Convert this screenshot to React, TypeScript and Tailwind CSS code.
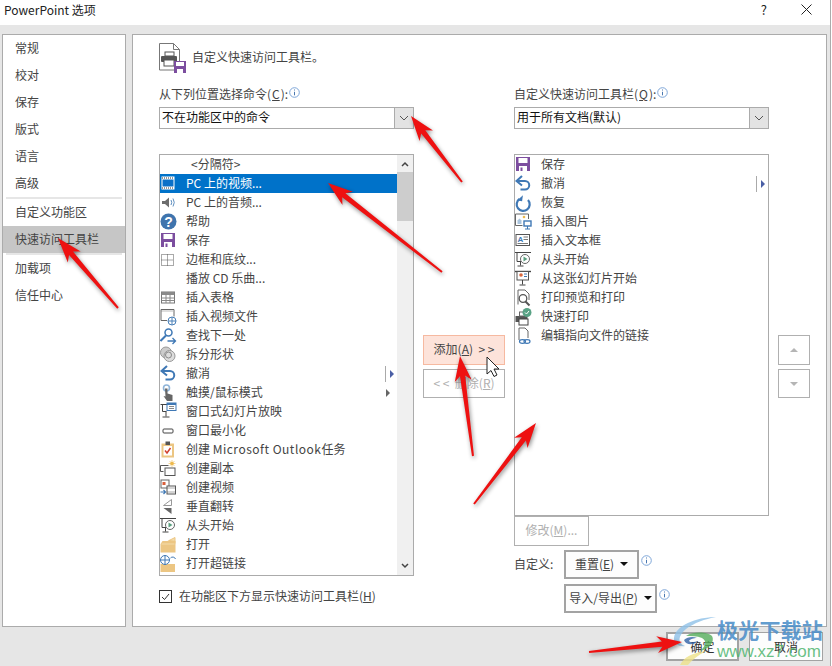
import React from 'react';

const FONT = "font-['Noto_Sans_CJK_SC','Noto_Sans',sans-serif]";

/* small command icons, all drawn on an 18x18 box */
function CmdIcon({ name }: { name: string }) {
  const g = '#6d6d6d';
  const blue = '#3f78b5';
  const tan = '#ecc683';
  let body: React.ReactNode = null;
  switch (name) {
    case 'film':
      body = (
        <>
          <rect x="1.500" y="1.500" width="13" height="13" fill="#fff" />
          <rect x="2.500" y="4.500" width="11" height="7" fill="#0a70c8" />
          <path d="M2 3h12M2 13h12" stroke="#333" strokeDasharray="1 1" />
        </>
      );
      break;
    case 'speaker':
      body = (
        <>
          <path d="M2 7h3l4-3.500v10L5 10H2z" fill={g} />
          <path d="M11 6q1.500 2.500 0 5M13 4.500q2.500 4 0 8" stroke="#5f8fc0" fill="none" />
        </>
      );
      break;
    case 'help':
      body = (
        <>
          <circle cx="8.500" cy="8.500" r="8" fill="#3f74ad" />
          <text x="8.500" y="13.500" textAnchor="middle" fontSize="14" fontWeight="700" fill="#fff" fontFamily="Liberation Sans">?</text>
        </>
      );
      break;
    case 'save':
      body = (
        <>
          <rect x="1" y="1" width="14" height="14" fill="#7c4e9f" />
          <rect x="3.500" y="2" width="9" height="5" fill="#fff" />
          <rect x="4" y="10" width="8" height="5" fill="#fff" />
          <rect x="5.500" y="11.500" width="2" height="3.500" fill="#7c4e9f" />
        </>
      );
      break;
    case 'border':
      body = <path d="M1.500 3.500h12v11h-12zM7.500 3.500v11M1.500 9h12" fill="none" stroke="#555" strokeDasharray="1 1" />;
      break;
    case 'table':
      body = (
        <>
          <rect x="1.500" y="3" width="13" height="11" fill="#fff" stroke="#777" />
          <rect x="1.500" y="3" width="13" height="3" fill="#8a8a8a" />
          <path d="M1.500 9h13M1.500 11.500h13M6 6v8M10 6v8" stroke="#888" />
        </>
      );
      break;
    case 'videofile':
      body = (
        <>
          <path d="M1 1.500h13v7M1 1.500v11h6" fill="none" stroke="#666" />
          <path d="M1.500 3h12" stroke="#777" strokeDasharray="1 1" />
          <circle cx="12" cy="13" r="4" fill="#fff" stroke="#4a80b8" />
          <path d="M8 13h8M12 9v8" stroke="#4a80b8" />
        </>
      );
      break;
    case 'find':
      body = (
        <>
          <circle cx="8.500" cy="5.500" r="3.500" fill="#fff" stroke={blue} strokeWidth="1.500" />
          <path d="M6 8.500L.5 14" stroke={blue} strokeWidth="2" />
          <path d="M7.500 14h8M12.500 11l3 3-3 3" stroke={blue} strokeWidth="1.300" fill="none" />
        </>
      );
      break;
    case 'split':
      body = (
        <>
          <circle cx="6" cy="6.500" r="5.500" fill="#ccc" stroke="#999" />
          <circle cx="9.500" cy="10" r="5.500" fill="#ddd" stroke="#999" />
          <circle cx="8.500" cy="9" r="3" fill="none" stroke="#888" />
        </>
      );
      break;
    case 'undo':
      body = (
        <>
          <path d="M3 6h7a4 4 0 0 1 0 8.500H5.500" fill="none" stroke={blue} strokeWidth="2" />
          <path d="M7 1L1.500 6 7 10.500" fill="none" stroke={blue} strokeWidth="2" />
        </>
      );
      break;
    case 'redo':
      body = (
        <>
          <path d="M4.500 4a6.500 6.500 0 1 0 8.500 1" fill="none" stroke={blue} strokeWidth="2.200" transform="translate(0 1)" />
          <path d="M7.500 1v6h-5z" fill={blue} transform="rotate(8 6 4)" />
        </>
      );
      break;
    case 'touch':
      body = (
        <>
          <circle cx="6.500" cy="4" r="3" fill="none" stroke="#8fb4d8" strokeWidth="1.600" />
          <path d="M5 4.500h2.500v5l5 1.500v6H7L3.500 12l2 .5z" fill="#666" />
        </>
      );
      break;
    case 'window':
      body = (
        <>
          <path d="M.5 1.500h9M2.500 1.500v7h4M6 8.500v5M2.500 14h7" stroke="#444" fill="none" />
          <rect x="7" y="0" width="9" height="7.500" fill="#fff" stroke={blue} />
          <rect x="7" y="0" width="9" height="2" fill={blue} />
          <path d="M9 3.500h5M9 5.500h5" stroke="#888" />
        </>
      );
      break;
    case 'minimize':
      body = <rect x="3" y="7" width="10" height="4" rx="1" fill="#fff" stroke="#444" />;
      break;
    case 'task':
      body = (
        <>
          <rect x="1.500" y="2.500" width="12.500" height="14" fill={tan} />
          <rect x="3.500" y="5" width="8.500" height="9.500" fill="#fff" />
          <rect x="5.500" y="0.500" width="4.500" height="3.500" fill="#555" />
          <path d="M5 9.500l2 2.500 3.500-5" fill="none" stroke="#d0402f" strokeWidth="1.500" />
        </>
      );
      break;
    case 'copy':
      body = (
        <>
          <path d="M.5 5.500h8M.5 5.500v6h3" fill="none" stroke="#555" />
          <rect x="5" y="8" width="10" height="7.500" fill="#fff" stroke="#555" />
          <circle cx="12" cy="3.500" r="1.800" fill="#eeb94c" />
          <path d="M12 0v7M8.500 3.500h7M9.500 1l5 5M14.500 1l-5 5" stroke="#eeb94c" strokeWidth=".6" />
        </>
      );
      break;
    case 'makevideo':
      body = (
        <>
          <rect x="1" y="1" width="8" height="8" fill="#fff" stroke="#666" />
          <rect x="2.500" y="3" width="3" height="3" fill="#d95f3b" />
          <rect x="7" y="7" width="8.500" height="8" fill="#fff" stroke="#555" />
          <path d="M7.500 9h8M7.500 13h8" stroke="#555" strokeDasharray="1 1" />
          <path d="M.5 13h5M3.500 11l2 2-2 2" stroke={blue} fill="none" strokeWidth="1.200" />
        </>
      );
      break;
    case 'flip':
      body = (
        <>
          <path d="M11.500 1.500v6L3.500 7.500z" fill="#fff" stroke="#999" />
          <path d="M11.500 10v6l-8-6z" fill="#666" />
        </>
      );
      break;
    case 'start':
      body = (
        <>
          <path d="M0 1.500h16M2 1.500v9h4M5.500 10.500v4M2.500 15h6" stroke="#444" fill="none" />
          <circle cx="10" cy="8" r="4.500" fill="#fff" stroke="#666" />
          <path d="M8.500 5.500l4 2.500-4 2.500z" fill="#5a9e7e" />
        </>
      );
      break;
    case 'open':
      body = (
        <>
          <path d="M9 4.500l6-3v6z" fill="#f4dcaa" stroke={tan} />
          <path d="M.5 16.500V8l2-3h5l1.500-1 6.500 1v11.500z" fill={tan} />
          <path d="M1.500 8h13" stroke="#f4dcaa" />
        </>
      );
      break;
    case 'link':
      body = (
        <>
          <path d="M.5 17V9h14.500v8z" fill={tan} />
          <path d="M10.500 3a3 3 0 0 1 5 1" fill="none" stroke={blue} />
          <circle cx="5" cy="5" r="4.500" fill="#fff" stroke={blue} />
          <path d="M.5 5h9M5 .5v9" stroke={blue} />
        </>
      );
      break;
    case 'picture':
      body = (
        <>
          <path d="M7.500 12.500h-7V1h13v5" fill="#fff" stroke="#666" />
          <path d="M2.500 11V7.500l2-2 2 2V11z" fill="#a9c4de" />
          <circle cx="9" cy="4" r="1.300" fill="#eeb94c" />
          <rect x="9" y="8" width="7" height="5" fill="#fff" stroke={blue} strokeWidth="1.400" />
          <path d="M12.500 13v3M10 16h5" stroke={blue} />
        </>
      );
      break;
    case 'textbox':
      body = (
        <>
          <rect x="1" y="2.500" width="13.500" height="11" fill="#fff" stroke="#555" />
          <text x="2.500" y="10" fontSize="8" fontWeight="700" fill={blue} fontFamily="Liberation Sans">A</text>
          <path d="M8.500 5H13M8.500 7.500H13M2.500 11.500H13" stroke="#777" />
        </>
      );
      break;
    case 'current':
      body = (
        <>
          <path d="M0 1.500h16" stroke="#444" strokeWidth="1.400" />
          <rect x="2" y="1.500" width="11.500" height="8.500" fill="#fff" stroke="#555" />
          <circle cx="6" cy="5" r="1.800" fill="#d9683f" />
          <path d="M9 4h3M9 6.500h3" stroke={blue} />
          <path d="M7.500 10v4.500M4.500 15h6" stroke="#444" />
        </>
      );
      break;
    case 'preview':
      body = (
        <>
          <path d="M3 15.500V1h7l4 4v6" fill="#fff" stroke="#666" />
          <circle cx="8" cy="9.500" r="3.800" fill="#fff" stroke="#555" strokeWidth="1.300" />
          <path d="M10.500 12.500l4 4" stroke="#555" strokeWidth="2" />
        </>
      );
      break;
    case 'quick':
      body = (
        <>
          <path d="M.5 8h12v6H.5z" fill="#555" />
          <rect x="4" y="11" width="9" height="6" fill="#fff" stroke="#444" />
          <rect x="4.500" y="4" width="8" height="4" fill="#fff" stroke="#666" />
          <circle cx="12" cy="4.500" r="4.500" fill="#59a285" />
          <path d="M10 4.500l1.500 1.500L14 3" stroke="#fff" fill="none" />
        </>
      );
      break;
    case 'doclink':
      body = (
        <>
          <path d="M4 13V1h6l3 3v7" fill="#fff" stroke="#666" />
          <ellipse cx="7.500" cy="14.500" rx="3" ry="1.800" fill="none" stroke={blue} strokeWidth="1.200" />
          <ellipse cx="12" cy="14.500" rx="3" ry="1.800" fill="none" stroke={blue} strokeWidth="1.200" />
        </>
      );
      break;
  }
  return (
    <svg width="18" height="18" viewBox="0 0 18 18" className="overflow-visible shrink-0">
      {body}
    </svg>
  );
}

function InfoDot() {
  return (
    <svg width="11" height="11" viewBox="0 0 11 11" className="shrink-0">
      <circle cx="5.500" cy="5.500" r="4.800" fill="#fff" stroke="#7ea6d8" />
      <path d="M5.500 2.500v1M5.500 4.800v3.500" stroke="#4a78b0" />
    </svg>
  );
}

function Chevron() {
  return (
    <svg width="10" height="6" viewBox="0 0 10 6">
      <path d="M1 1l4 4 4-4" fill="none" stroke="#555" />
    </svg>
  );
}

function ComboBox({ value }: { value: string }) {
  return (
    <div className="flex h-[22px] border border-[#ababab] bg-white">
      <span className="flex-1 pl-[2px] text-[12px] leading-[18px] text-[#111]">{value}</span>
      <span className="flex w-[19px] items-center justify-center border-l border-[#ababab] bg-[#e3e3e3]">
        <Chevron />
      </span>
    </div>
  );
}

type Cmd = {
  icon?: string;
  label: string;
  node?: React.ReactNode;
  split?: boolean;
  more?: boolean;
  selected?: boolean;
  center?: boolean;
};

const leftCommands: Cmd[] = [
  { label: '<分隔符>', center: true },
  { icon: 'film', label: 'PC 上的视频...', selected: true },
  { icon: 'speaker', label: 'PC 上的音频...' },
  { icon: 'help', label: '帮助' },
  { icon: 'save', label: '保存' },
  { icon: 'border', label: '边框和底纹...' },
  { label: '播放 CD 乐曲...' },
  { icon: 'table', label: '插入表格' },
  { icon: 'videofile', label: '插入视频文件' },
  { icon: 'find', label: '查找下一处' },
  { icon: 'split', label: '拆分形状' },
  { icon: 'undo', label: '撤消', split: true },
  { icon: 'touch', label: '触摸/鼠标模式', more: true },
  { icon: 'window', label: '窗口式幻灯片放映' },
  { icon: 'minimize', label: '窗口最小化' },
  {
    icon: 'task',
    label: '创建 Microsoft Outlook任务',
    node: (
      <>
        创建 <span className="tracking-[0.5px]">Microsoft Outlook</span>任务
      </>
    ),
  },
  { icon: 'copy', label: '创建副本' },
  { icon: 'makevideo', label: '创建视频' },
  { icon: 'flip', label: '垂直翻转' },
  { icon: 'start', label: '从头开始' },
  { icon: 'open', label: '打开' },
  { icon: 'link', label: '打开超链接' },
];

const rightCommands: Cmd[] = [
  { icon: 'save', label: '保存' },
  { icon: 'undo', label: '撤消', split: true },
  { icon: 'redo', label: '恢复' },
  { icon: 'picture', label: '插入图片' },
  { icon: 'textbox', label: '插入文本框' },
  { icon: 'start', label: '从头开始' },
  { icon: 'current', label: '从这张幻灯片开始' },
  { icon: 'preview', label: '打印预览和打印' },
  { icon: 'quick', label: '快速打印' },
  { icon: 'doclink', label: '编辑指向文件的链接' },
];

function CommandRow({ cmd }: { cmd: Cmd }) {
  return (
    <div
      className={`flex h-[19px] items-center text-[12px] ${
        cmd.selected ? 'bg-[#0072c9] text-white' : 'text-[#444]'
      }`}
    >
      <span className="flex w-[26px] shrink-0 items-center">{cmd.icon && <CmdIcon name={cmd.icon} />}</span>
      <span className={`flex-1 whitespace-nowrap pb-[2px] leading-[17px] ${cmd.center ? 'pl-[5px]' : ''}`}>
        {cmd.node ?? cmd.label}
      </span>
      {cmd.split && (
        <span className="mr-[3px] flex h-[16px] items-center gap-[3px] border-l border-[#aaa] pl-[4px]">
          <span className="h-0 w-0 border-y-[4px] border-l-[4px] border-y-transparent border-l-[#4a5fa5]" />
        </span>
      )}
      {cmd.more && (
        <span className="mr-[7px] h-0 w-0 border-y-[4px] border-l-[4px] border-y-transparent border-l-[#666]" />
      )}
    </div>
  );
}

function LeftList() {
  return (
    <div className="flex h-[422px] border border-[#ababab] bg-white">
      <div className="flex-1 overflow-hidden">
        {leftCommands.map((cmd) => (
          <CommandRow key={cmd.label} cmd={cmd} />
        ))}
      </div>
      <div className="flex w-[16px] flex-col bg-[#f0f0f0]">
        <div className="flex h-[17px] items-center justify-center">
          <svg width="8" height="6" viewBox="0 0 8 6">
            <path d="M1 5l3-3 3 3" fill="none" stroke="#444" strokeWidth="1.500" />
          </svg>
        </div>
        <div className="h-[49px] bg-[#cdcdcd]" />
        <div className="flex flex-1 items-end justify-center pb-[6px]">
          <svg width="8" height="6" viewBox="0 0 8 6">
            <path d="M1 1l3 3 3-3" fill="none" stroke="#444" strokeWidth="1.500" />
          </svg>
        </div>
      </div>
    </div>
  );
}

function SideItem({ label, active }: { label: string; active?: boolean }) {
  return (
    <div className={`h-[27px] pl-[12px] text-[12px] leading-[25px] text-[#444] ${active ? 'bg-[#c6c6c6]' : ''}`}>
      {label}
    </div>
  );
}

function SideDivider() {
  return <div className="mx-[3px] h-[2px] bg-[#e6e6e6]" />;
}

function Sidebar() {
  return (
    <div className="h-[593px] w-[124px] border border-[#ababab] bg-white">
      {['常规', '校对', '保存', '版式', '语言', '高级'].map((s) => (
        <SideItem key={s} label={s} />
      ))}
      <SideDivider />
      <SideItem label="自定义功能区" />
      <SideItem label="快速访问工具栏" active />
      <SideDivider />
      <SideItem label="加载项" />
      <SideItem label="信任中心" />
    </div>
  );
}

function HeaderIcon() {
  return (
    <svg width="28" height="30" viewBox="0 0 28 30" className="shrink-0">
      <path d="M.5 27V.5h14l6 6V19" fill="#fff" stroke="#777" />
      <path d="M.5 27H15M14.500.5v6h6" fill="none" stroke="#777" />
      <rect x="6" y="9" width="9" height="4" fill="#fff" stroke="#555" />
      <rect x="2" y="13" width="16" height="6" rx="1" fill="#555" />
      <rect x="5" y="17" width="10" height="6" fill="#fff" stroke="#555" />
      <rect x="15" y="18" width="12" height="12" fill="#7c4e9f" />
      <rect x="17" y="19" width="8" height="4" fill="#fff" />
      <rect x="18" y="26" width="6" height="4" fill="#fff" />
    </svg>
  );
}

function PlainButton({ className, children }: { className: string; children: React.ReactNode }) {
  return <div className={`flex items-center justify-center text-[12px] ${className}`}>{children}</div>;
}

function Caret() {
  return <span className="h-0 w-0 border-x-[4px] border-t-[4px] border-x-transparent border-t-[#111]" />;
}

function ContentPanel() {
  return (
    <div className="h-[593px] w-[695px] border border-[#ababab] bg-white pl-[26px] pt-[8px] text-[#444]">
      <div className="flex h-[30px] items-center gap-[5px]">
        <HeaderIcon />
        <span className="pb-[2px] text-[12px]">自定义快速访问工具栏。</span>
      </div>
      <div className="mt-[12px] flex gap-[9px]">
        <div className="w-[255px]">
          <div className="flex h-[18px] items-center gap-[1px] text-[12px]">
            从下列位置选择命令(<u>C</u>):
            <span className="mb-[4px]">
              <InfoDot />
            </span>
          </div>
          <div className="mt-[4px]">
            <ComboBox value="不在功能区中的命令" />
          </div>
          <div className="mt-[25px]">
            <LeftList />
          </div>
          <div className="mt-[11px] flex items-center gap-[7px] text-[12px]">
            <span className="flex h-[13px] w-[13px] items-center justify-center border border-[#333] bg-white">
              <svg width="9" height="8" viewBox="0 0 9 8">
                <path d="M1 4l2.500 2.500L8 1" fill="none" stroke="#333" />
              </svg>
            </span>
            <span className="pb-[1px]">
              在功能区下方显示快速访问工具栏(<u>H</u>)
            </span>
          </div>
        </div>

        <div className="w-[82px] pt-[250px]">
          <PlainButton className="h-[30px] border border-[#f6b9a0] bg-[#fde3da] pb-[2px]">
            添加(<u>A</u>)&nbsp;&nbsp;&gt; &gt;
          </PlainButton>
          <PlainButton className="mt-[4px] h-[29px] border border-[#b0b0b0] pb-[2px] text-[#b0b0b0]">
            &lt; &lt;&nbsp;&nbsp;删除(<u>R</u>)
          </PlainButton>
        </div>

        <div className="w-[255px]">
          <div className="flex h-[18px] items-center gap-[1px] text-[12px]">
            自定义快速访问工具栏(<u>Q</u>):
            <span className="mb-[4px]">
              <InfoDot />
            </span>
          </div>
          <div className="mt-[4px]">
            <ComboBox value="用于所有文档(默认)" />
          </div>
          <div className="mt-[25px] h-[362px] border border-[#ababab] bg-white">
            {rightCommands.map((cmd) => (
              <CommandRow key={cmd.label} cmd={cmd} />
            ))}
          </div>
          <PlainButton className="h-[30px] w-[75px] border border-[#b0b0b0] pb-[2px] text-[#b0b0b0]">
            修改(<u>M</u>)...
          </PlainButton>
          <div className="mt-[4px] flex items-start">
            <span className="mt-[5px] w-[50px] text-[12px]">自定义:</span>
            <div>
              <div className="flex items-start gap-[1px]">
                <PlainButton className="h-[29px] w-[75px] gap-[6px] border-2 border-[#a3a3a3] bg-[#fdfdfd] pb-[1px]">
                  <span>
                    重置(<u>E</u>)
                  </span>
                  <Caret />
                </PlainButton>
                <span className="ml-[1px] mt-[5px]">
                  <InfoDot />
                </span>
              </div>
              <div className="mt-[5px] flex items-start gap-[1px]">
                <PlainButton className="h-[29px] w-[93px] gap-[6px] border-2 border-[#a3a3a3] bg-[#fdfdfd] pb-[1px]">
                  <span>
                    导入/导出(<u>P</u>)
                  </span>
                  <Caret />
                </PlainButton>
                <span className="ml-[1px] mt-[5px]">
                  <InfoDot />
                </span>
              </div>
            </div>
          </div>
        </div>

        <div className="w-[32px] pt-[250px]">
          <div className="flex h-[30px] items-center justify-center border border-[#b0b0b0]">
            <span className="h-0 w-0 border-x-[4px] border-b-[4px] border-x-transparent border-b-[#b5b5b5]" />
          </div>
          <div className="mt-[4px] flex h-[29px] items-center justify-center border border-[#b0b0b0]">
            <span className="h-0 w-0 border-x-[4px] border-t-[4px] border-x-transparent border-t-[#b5b5b5]" />
          </div>
        </div>
      </div>
    </div>
  );
}

/* red annotation arrows painted on top of the screenshot */
function Arrow({ x1, y1, x2, y2 }: { x1: number; y1: number; x2: number; y2: number }) {
  const len = Math.hypot(x2 - x1, y2 - y1);
  const ux = (x2 - x1) / len;
  const uy = (y2 - y1) / len;
  const nx = -uy;
  const ny = ux;
  const pt = (along: number, side: number) =>
    `${x1 + ux * along + nx * side},${y1 + uy * along + ny * side}`;
  const d = [
    pt(0, -1),
    pt(len - 20, -2.6),
    pt(len - 25, -8.5),
    pt(len, 0),
    pt(len - 25, 8.5),
    pt(len - 20, 2.6),
    pt(0, 1),
  ].join(' ');
  return <polygon points={d} fill="#ee1111" className="drop-shadow-[1px_2px_2px_rgba(0,0,0,0.45)]" />;
}

function Annotations() {
  return (
    <svg width="832" height="666" viewBox="0 0 832 666" className="pointer-events-none absolute left-0 top-0">
      <Arrow x1={118} y1={308} x2={58} y2={238} />
      <Arrow x1={462} y1={182} x2={411} y2={116} />
      <Arrow x1={442} y1={272} x2={328} y2={183} />
      <Arrow x1={473} y1={456} x2={460} y2={356} />
      <Arrow x1={474} y1={504} x2={536} y2={423} />
      <Arrow x1={589} y1={652} x2={682} y2={642} />
      <path d="M487 357v17l4-3.500 3 6 3-1.500-3-6h5z" fill="#fff" stroke="#222" />
    </svg>
  );
}

function Watermark() {
  return (
    <div className="pointer-events-none absolute left-[672px] top-[616px] flex h-[50px] w-[156px]">
      <svg width="46" height="50" viewBox="0 0 46 50" className="shrink-0 opacity-80">
        <path d="M44 1C24 1 3 10 2 22c-1 6 6 9 11 8C5 27 6 20 14 13 22 7 33 3 44 1z" fill="#8fc1e8" />
        <path d="M14 20c8-5 22-4 26 0 3 5-2 13-12 15 6-5 7-10 2-13-5-2-11-2-16-2z" fill="#54ad5b" />
        <path d="M12 24c3-3 9-4 13-2-3 0-7 1-8 3 2 2 6 1 9 0-3 4-12 5-14-1z" fill="#2f62a8" />
        <path d="M8 49c4-8 12-12 26-14-8 4-14 9-18 14z" fill="#eee28a" />
      </svg>
      <div className="-ml-[1px] flex flex-col">
        <span className="font-['Noto_Sans_CJK_SC'] text-[21px] font-bold leading-[26px] tracking-[0.2px] text-[#4d8fc9]/90">
          极光下载站
        </span>
        <span className="font-['Liberation_Sans'] text-[17px] font-normal leading-[20px] text-[#4fb56f]/85">
          www.xz7.com
        </span>
      </div>
    </div>
  );
}

export default function App() {
  return (
    <div className={`relative h-[666px] w-[832px] overflow-hidden bg-white ${FONT}`}>
      <div className="h-[666px] w-[831px] border-r border-[#ababab] bg-[#e6e6e6]">
        {/* title bar */}
        <div className="flex h-[25px] items-center bg-white pl-[4px] text-[12px] text-[#222]">
          <span className="flex-1 pb-[6px]">PowerPoint 选项</span>
          <span className="mr-[34px] pb-[6px] text-[13px]">?</span>
          <svg width="11" height="11" viewBox="0 0 11 11" className="mb-[6px] mr-[18px]">
            <path d="M.5.500l10 10M10.500.500l-10 10" stroke="#222" />
          </svg>
        </div>

        <div className="flex gap-[6px] pl-[2px] pt-[9px]">
          <Sidebar />
          <ContentPanel />
        </div>

        {/* dialog buttons */}
        <div className="flex justify-end gap-[10px] pr-[7px] pt-[5px] text-[#333]">
          <PlainButton className="h-[29px] w-[73px] border-2 border-[#a3a3a3] bg-[#fdfdfd]">确定</PlainButton>
          <PlainButton className="h-[29px] w-[74px] border border-[#a3a3a3] bg-[#fdfdfd]">取消</PlainButton>
        </div>
      </div>
      <Watermark />
      <Annotations />
    </div>
  );
}
